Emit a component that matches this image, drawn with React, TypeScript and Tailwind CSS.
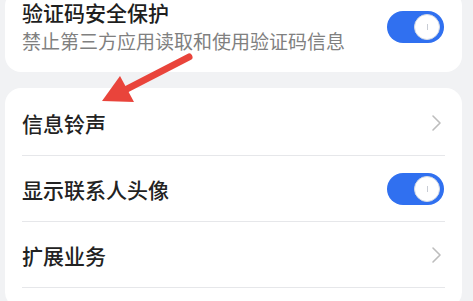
import React from 'react'

const FONT = { fontFamily: '"Noto Sans CJK SC", "Noto Sans", sans-serif' }

function Toggle() {
  return (
    <div className="relative w-[57px] h-[32px] rounded-full bg-[#3070f0] shrink-0">
      <div className="absolute right-[4px] top-[3px] w-[26px] h-[26px] rounded-full bg-white border border-[#d6dbe4] flex items-center justify-center">
        <div className="w-[1px] h-[6px] bg-[#c8ccd4]" />
      </div>
    </div>
  )
}

function Chevron() {
  return (
    <svg width="11" height="18" viewBox="0 0 11 18" className="shrink-0 mr-[2px]">
      <path d="M2 2 L9 9 L2 16" fill="none" stroke="#bdbdbd" strokeWidth="1.6" strokeLinecap="round" strokeLinejoin="round" />
    </svg>
  )
}

function Row({ label, right }: { label: string; right: React.ReactNode }) {
  return (
    <div className="mx-[17px] h-[66px] flex items-center justify-between border-b border-[#e6e7ea] pr-[1px]">
      <span className="text-[21px] leading-[26px] font-medium text-[#222222]">{label}</span>
      {right}
    </div>
  )
}

export default function App() {
  return (
    <div className="relative w-[473px] h-[301px] overflow-hidden bg-[#f1f2f4]" style={FONT}>
      {/* security card */}
      <div className="ml-[5px] w-[457px] mt-[-10px] bg-white rounded-[16px] pt-[11px] pb-[20px] pl-[17px] pr-[18px] flex items-center justify-between">
        <div className="flex flex-col">
          <span className="text-[21px] leading-[22px] font-medium text-[#1e1e1e]">验证码安全保护</span>
          <span className="mt-[7px] text-[19px] leading-[22px] text-[#808080]">禁止第三方应用读取和使用验证码信息</span>
        </div>
        <Toggle />
      </div>

      {/* settings card */}
      <div className="ml-[5px] w-[457px] mt-[16px] bg-white rounded-[16px] pt-[2px] pb-[20px]">
        <Row label="信息铃声" right={<Chevron />} />
        <Row label="显示联系人头像" right={<Toggle />} />
        <Row label="扩展业务" right={<Chevron />} />
      </div>

      {/* red annotation arrow */}
      <svg className="absolute left-0 top-0 pointer-events-none" width="473" height="301">
        <line x1="189" y1="57" x2="125" y2="90" stroke="#e9443b" strokeWidth="7" strokeLinecap="round" />
        <polygon points="102,101 120,76 134,102" fill="#e9443b" />
      </svg>
    </div>
  )
}
